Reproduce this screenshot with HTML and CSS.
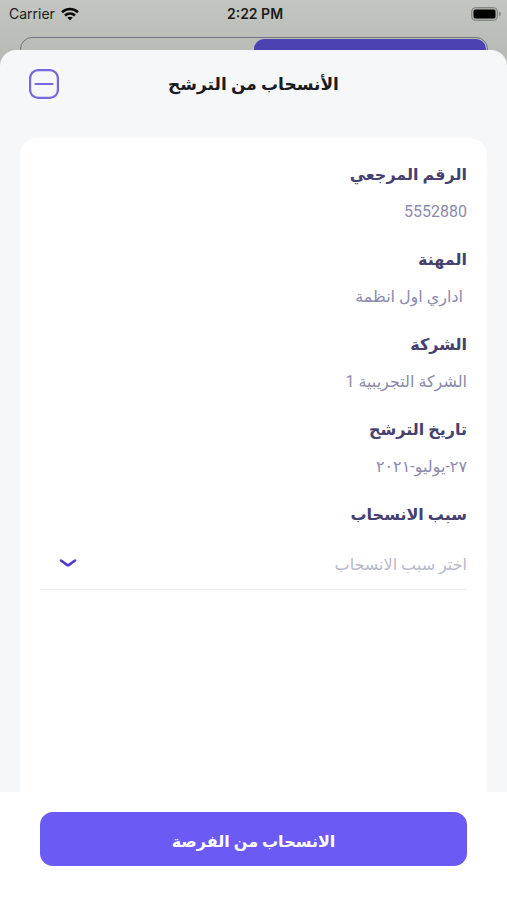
FILE: index.html
```html
<!DOCTYPE html>
<html lang="ar" dir="rtl">
<head>
    <meta charset="utf-8">
    <meta name="viewport" content="width=device-width, initial-scale=1">
    <title>الأنسحاب من الترشح</title>
    <link rel="stylesheet" href="styles.css">
</head>
<body>
    <!-- Status bar -->
    <div class="status-bar" dir="ltr">
        <div class="carrier">
            <span>Carrier</span>
            <svg width="18" height="14" viewBox="0 0 18 14" fill="none" stroke="#0b0b0b" stroke-width="2.6">
                <path d="M1 5.2C5.4 1 12.6 1 17 5.2"/>
                <path d="M4 8.5C6.8 5.9 11.2 5.9 14 8.5"/>
                <path d="M9 13.4L6.3 10.6C7.8 9.3 10.2 9.3 11.7 10.6Z" fill="#0b0b0b" stroke="none"/>
            </svg>
        </div>
        <span class="time">2:22 PM</span>
        <div class="battery">
            <svg width="30" height="14" viewBox="0 0 30 14">
                <rect x="0.5" y="0.5" width="26" height="13" rx="4" fill="#a9aba7" stroke="#858783"/>
                <rect x="2.5" y="2.5" width="22" height="9" rx="2" fill="#000"/>
                <path d="M28 4.5C30.4 5.5 30.4 8.5 28 9.5Z" fill="#858783"/>
            </svg>
        </div>
    </div>

    <!-- Page behind the sheet -->
    <div class="tabs">
        <div class="tab active"></div>
        <div class="tab"></div>
    </div>

    <main class="sheet">
        <header class="sheet-header">
            <h1>الأنسحاب من الترشح</h1>
            <button type="button" class="close" aria-label="إغلاق">
                <svg width="30" height="30" viewBox="0 0 30 30" fill="none" stroke="#7567dc" stroke-width="2.2">
                    <rect x="1.1" y="1.1" width="27.8" height="27.8" rx="8"/>
                    <path d="M6.5 15H23.5" stroke-linecap="round"/>
                </svg>
            </button>
        </header>

        <section class="card">
            <dl class="details">
                <div class="field">
                    <dt>الرقم المرجعي</dt>
                    <dd>5552880</dd>
                </div>
                <div class="field">
                    <dt>المهنة</dt>
                    <dd>&nbsp;اداري اول انظمة</dd>
                </div>
                <div class="field">
                    <dt>الشركة</dt>
                    <dd>الشركة التجريبية 1</dd>
                </div>
                <div class="field">
                    <dt>تاريخ الترشح</dt>
                    <dd>٢٧-يوليو-٢٠٢١</dd>
                </div>
            </dl>
            <div class="reason">
                <label for="reason">سبب الانسحاب</label>
                <div class="select-box">
                    <select id="reason">
                        <option>اختر سبب الانسحاب</option>
                    </select>
                    <svg class="chevron" width="18" height="10" viewBox="0 0 18 10" fill="none" stroke="#5039cf" stroke-width="2.6" stroke-linecap="round" stroke-linejoin="round">
                        <path d="M2 2.5L8 6.9Q9 7.6 10 6.9L16 2.5"/>
                    </svg>
                </div>
            </div>
        </section>

        <footer class="actions">
            <button type="button" class="submit">الانسحاب من الفرصة</button>
        </footer>
    </main>
</body>
</html>
```

FILE: styles.css
```css
* {
    box-sizing: border-box;
}

body {
    margin: 0;
    min-height: 100vh;
    display: flex;
    flex-direction: column;
    background: linear-gradient(#c4c6c2, #b9bbb7 50px);
    font-family: Roboto, "DejaVu Sans", sans-serif;
}

/* Status bar */
.status-bar {
    display: flex;
    align-items: center;
    height: 27px;
    padding: 0 6px 0 9px;
    font-family: Inter, sans-serif;
    font-size: 14px;
    color: #1c1c1c;
}

.carrier,
.battery {
    flex: 1;
    display: flex;
    align-items: center;
    gap: 6px;
}

.battery {
    justify-content: flex-end;
}

.time {
    font-weight: 600;
}

/* Tabs */
.tabs {
    display: flex;
    height: 40px;
    margin: 10px 19px 0 20px;
    padding: 1px;
    border: 1px solid #74737f;
    border-radius: 12px;
}

.tab {
    flex: 1;
    border-radius: 10px;
}

.tab.active {
    background: #4c42b2;
}

/* Sheet */
.sheet {
    position: relative;
    flex: 1;
    display: flex;
    flex-direction: column;
    margin-top: -27px;
    background: #f5f7f9;
    border-radius: 16px 16px 0 0;
    overflow: hidden;
}

.sheet-header {
    display: grid;
    grid-template-columns: 30px 1fr 30px;
    align-items: center;
    height: 68px;
    padding: 0 29px;
}

.sheet-header h1 {
    grid-column: 2;
    margin: 0;
    text-align: center;
    font-size: 17px;
    color: #1b1b20;
}

.close {
    height: 30px;
    padding: 0;
    border: none;
    background: none;
    cursor: pointer;
}

.card {
    flex: 1;
    margin: 20px 20px 0;
    padding: 21px 20px;
    background: #fff;
    border-radius: 18px 18px 0 0;
}

.details {
    display: flex;
    flex-direction: column;
    gap: 16px;
    margin: 0 0 16px;
}

.field {
    display: flex;
    flex-direction: column;
    gap: 5px;
}

dt,
.reason label {
    display: block;
    line-height: 32px;
    font-size: 16px;
    font-weight: bold;
    color: #454070;
}

dd {
    margin: 0;
    line-height: 32px;
    font-size: 16px;
    color: #8d8aab;
}

/* Reason drop-down */
.select-box {
    position: relative;
    margin-top: 8px;
    border-bottom: 1px solid #ebecef;
}

.select-box select {
    display: block;
    width: 100%;
    height: 50px;
    padding: 0;
    border: none;
    background: none;
    appearance: none;
    font-family: inherit;
    font-size: 16px;
    color: #b9bac8;
}

.chevron {
    position: absolute;
    left: 19px;
    top: 19px;
    pointer-events: none;
}

/* Bottom button */
.actions {
    padding: 20px 40px 34px;
    background: #fff;
}

.submit {
    display: block;
    width: 100%;
    height: 54px;
    padding: 4px 0 0;
    border: none;
    border-radius: 13px;
    background: #6b5bf4;
    color: #fff;
    font-family: inherit;
    font-size: 16px;
    font-weight: bold;
    cursor: pointer;
}
```
